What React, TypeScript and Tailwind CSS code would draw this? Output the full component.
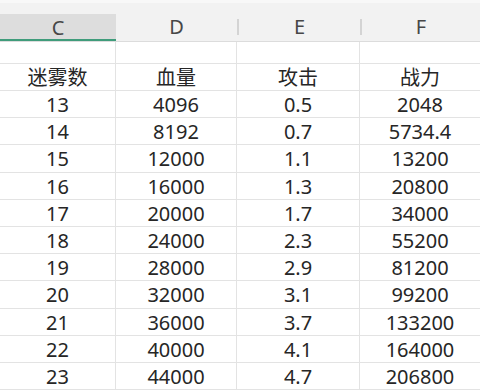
import React from "react";

const ROWS: [string, string, string, string][] = [
  ["13", "4096", "0.5", "2048"],
  ["14", "8192", "0.7", "5734.4"],
  ["15", "12000", "1.1", "13200"],
  ["16", "16000", "1.3", "20800"],
  ["17", "20000", "1.7", "34000"],
  ["18", "24000", "2.3", "55200"],
  ["19", "28000", "2.9", "81200"],
  ["20", "32000", "3.1", "99200"],
  ["21", "36000", "3.7", "133200"],
  ["22", "40000", "4.1", "164000"],
  ["23", "44000", "4.7", "206800"],
];

const COLS = "grid grid-cols-[116px_121px_123px_120px]";

function Row({ cells, h }: { cells: string[]; h: string }) {
  return (
    <div className={`${COLS} ${h} border-b border-[#e3e3e3]`}>
      {cells.map((c, i) => (
        <div
          key={i}
          className={`flex items-center justify-center pt-[2px] ${i < 3 ? "border-r border-[#e3e3e3]" : ""}`}
        >
          {c}
        </div>
      ))}
    </div>
  );
}

export default function App() {
  return (
    <div
      className="w-[480px] h-[390px] overflow-hidden bg-white text-[20px] leading-none text-[#262626]"
      style={{ fontFamily: '"Noto Sans", "Noto Sans CJK SC", sans-serif' }}
    >
      {/* 列标题 */}
      <div className={`${COLS} h-[42px] bg-[#f2f2f2] border-t-[3px] border-t-[#f8f8f8] border-b border-b-[#dcdcdc] text-[#474747]`}>
        <div className="mt-[11px] flex items-center justify-center pt-[3px] bg-[#dddddd] border-b-2 border-[#3f9c7b]">C</div>
        <div className="flex items-center pt-[10px]">
          <div className="flex-1 text-center">D</div>
        </div>
        <div className="flex items-center pt-[10px]">
          <div className="h-[16px] w-[2px] bg-[#d4d4d4]" />
          <div className="flex-1 text-center">E</div>
        </div>
        <div className="flex items-center pt-[10px]">
          <div className="h-[16px] w-[2px] bg-[#d4d4d4]" />
          <div className="flex-1 text-center">F</div>
        </div>
      </div>

      <Row cells={["", "", "", ""]} h="h-[22px]" />
      <Row cells={["迷雾数", "血量", "攻击", "战力"]} h="h-[27px]" />
      {ROWS.map((r) => (
        <Row key={r[0]} cells={r} h="h-[27.2px]" />
      ))}
    </div>
  );
}
